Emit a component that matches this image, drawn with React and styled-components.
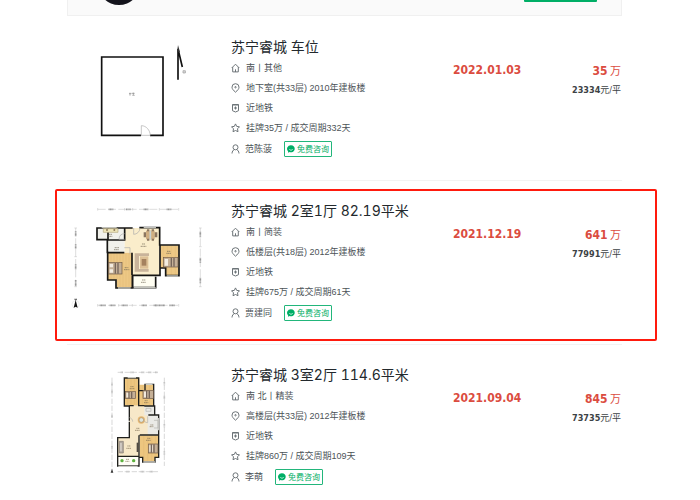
import React from "react";
import styled, { createGlobalStyle, css } from "styled-components";

const Global = createGlobalStyle`
  html { scrollbar-width: none; }
  body {
    margin: 0;
    background: #fff;
    color: #4c5357;
    font: 9px/20px "Liberation Sans", "Noto Sans CJK SC", sans-serif;
  }
  * { box-sizing: border-box; }
`;

const Page = styled.main`
  padding: 0 78px 0 67px;
`;

const AgentBar = styled.header`
  display: flex;
  align-items: flex-end;
  justify-content: space-between;
  height: 16px;
  margin-bottom: 1px;
  padding: 0 24px 10px 30px;
  overflow: hidden;
  background: #fafafa;
  border: 1px solid #f0f0f0;
  border-top: 0;
`;

const Avatar = styled.div`
  flex: none;
  width: 42px;
  height: 42px;
  border-radius: 50%;
  background: #14141c;
`;

const ContactButton = styled.button`
  flex: none;
  width: 73px;
  height: 24px;
  margin-bottom: 3px;
  border: 0;
  border-radius: 1px;
  background: #00ae66;
`;

const List = styled.ul`
  margin: 0;
  padding: 0;
  list-style: none;
`;

const Row = styled.li`
  position: relative;
  display: grid;
  grid-template-columns: 164px minmax(0, 1fr) 90px 79px;
  padding: 20px 0 21px;
  border-bottom: 1px solid #f3f3f3;
  ${({ $marked }) =>
    $marked &&
    css`
      &::after {
        content: "";
        position: absolute;
        inset: 8px -35px 3px -12px;
        border: 2px solid #ff1a0d;
        border-radius: 2px;
        pointer-events: none;
      }
    `}
`;

const Plan = styled.svg`
  display: block;
  width: 150px;
  height: 130px;
  margin-top: -10px;
`;

const Title = styled.h2`
  margin: 0 0 1px;
  color: #23292d;
  font: 400 14px/20px Inter, "Noto Sans CJK SC", sans-serif;
  font-variant-numeric: tabular-nums;
  white-space: nowrap;
`;

const Detail = styled.div`
  display: flex;
  align-items: center;
  gap: 6px;
  height: 20px;
  white-space: nowrap;
`;

const Agent = styled(Detail)`
  gap: 5px;
  margin-top: 1px;
`;

const Icon = styled.svg`
  flex: none;
  width: 9px;
  height: 10px;
  fill: none;
  stroke: #6d7478;
  stroke-width: 1;
`;

const Consult = styled.button`
  display: flex;
  align-items: center;
  gap: 2px;
  height: 16px;
  margin-left: 7px;
  padding: 0 2px;
  border: 1px solid #22b67b;
  border-radius: 1px;
  background: #fff;
  color: #00ae66;
  font: 8px/14px "Noto Sans CJK SC", sans-serif;
`;

const Bubble = styled.svg`
  width: 8px;
  height: 8px;
`;

const SoldOn = styled.div`
  margin-top: 23px;
  color: #db4c3f;
  font: 700 12px/20px "DejaVu Sans Condensed", "DejaVu Sans", sans-serif;
`;

const Price = styled.div`
  margin-top: 23px;
  padding-right: 1px;
  color: #db4c3f;
  font: 400 11px/20px "Noto Sans CJK SC", sans-serif;
  text-align: right;
  white-space: nowrap;
`;

const Total = styled.strong`
  font: 700 12px/20px "DejaVu Sans Condensed", "DejaVu Sans", sans-serif;
`;

const UnitPrice = styled.div`
  color: #3c4245;
  font: 400 9px/18px "DejaVu Sans Condensed", "Noto Sans CJK SC", sans-serif;
`;

const PATHS = {
  home: <path d="M.7 5 4.5 1.2 8.3 5M1.7 4.2V8.9h5.6V4.2M4.5 6.3V9" />,
  pin: (
    <>
      <path d="M4.5 9.2C2.4 7.4 1 5.9 1 4.2a3.5 3.5 0 0 1 7 0c0 1.7-1.4 3.2-3.5 5Z" />
      <circle cx="4.5" cy="4.2" r=".7" />
    </>
  ),
  tag: <path d="M1.5 1.5h6v6.2l-3 1.3-3-1.3ZM1.5 2h6M4.5 3.5v3M3 5h3" />,
  star: <path d="m4.5.9 1.2 2.5 2.8.4-2 2 .5 2.9-2.5-1.2L2 8.700l.5-2.900-2-2 2.800-.4Z" />,
  person: (
    <>
      <circle cx="4.500" cy="3.300" r="2.500" />
      <path d="M1 9.500c.1-2 1-3.300 2.400-3.900M8 9.500c-.1-2-1-3.300-2.400-3.900" />
    </>
  ),
};

const Glyph = ({ name }) => (
  <Icon viewBox="0 0 9 10" aria-hidden="true">{PATHS[name]}</Icon>
);

const ParkingPlan = () => (
  <Plan viewBox="0 0 150 130" role="img" aria-label="车位户型图">
    <g transform="translate(13 8) scale(.33333)" fill="none">
      <path d="M183 301H65V66h184v235h-39" stroke="#111" strokeWidth="5" />
      <path d="M184 303v-31c15 0 26 14 27 29h-27" stroke="#aaa" strokeWidth="2" />
      <path d="M147 176h7m-4-3v9m5-7h9m-7 6h7m-4-8v7" stroke="#888" strokeWidth="2" />
      <path d="M294 134V42l13 54" stroke="#111" strokeWidth="5" strokeLinejoin="bevel" />
      <path d="M294 30 291 52h9Z" fill="#333" />
      <path d="M309 107h7v7h-7Zm0 4h8" stroke="#999" strokeWidth="2" />
    </g>
  </Plan>
);

const Bed = ({ x, y, w = 38, h = 34 }) => (
  <g transform={`translate(${x} ${y})`}>
    <rect width={w} height={h} fill="#c5b097" stroke="#6e5947" strokeWidth="2" />
    <path d={`M3 4h10v10H3ZM3 ${h - 14}h10v10H3Z`} fill="#f3ece0" />
    <path d={`M${w - 12} 1v${h - 2}M${w - 20} 1v${h - 2}`} stroke="#75655a" strokeWidth="4" />
  </g>
);

const TwoRoomPlan = () => (
  <Plan viewBox="0 0 150 130" role="img" aria-label="两室一厅户型图">
    <g transform="translate(-7 4) scale(.33333)" fill="none">
      <g stroke="#bcbcbc" strokeWidth="1.500">
        <path d="M113 43h243M113 331h243M47 99v176M421 99v176" strokeDasharray="24 7" />
        <path d="M113 39v8M194 39v8M218 39v8M298 39v8M356 39v8M113 327v8M176 327v8M217 327v8M288 327v8M356 327v8M43 99h8M43 185h8M43 275h8M417 99h8M417 155h8M417 275h8" />
      </g>
      <g stroke="#9a9a9a" strokeWidth="5" strokeDasharray="3 1">
        <path d="M146 43h14M198 43h14M251 43h14M320 43h14M119 331h18M149 331h17M185 331h18M245 331h16M281 331h34M328 331h17" />
        <path d="M47 109v15M47 148v13M47 208v15M47 255v18M421 110v17M421 188v15M421 248v17" />
      </g>
      <path d="M113 99h81v35h-81ZM144 134h50v39h-50Z" fill="#f1f1eb" />
      <path d="M194 99h104v141h-80v-67h-24Z" fill="#faedcb" />
      <path d="M144 173h73v105h-47v-23h-26ZM301 151h55v91h-39v-23h-16Z" fill="#edc885" />
      <path d="M218 241h70v36h-70Z" fill="#fffef2" />
      <g stroke="#deb573" strokeWidth="1">
        <path d="M153 175v78M162 175v78M171 175v102M180 175v102M189 175v102M198 175v102M207 175v102M310 153v66M322 153v87M334 153v87M346 153v87" />
      </g>
      <path d="M218 99h-24v36h-50v-36h-33v35h31v38h1v83h25v24h50v-38h82v-22h17v23h40v-92h-58v-52h-61M194 99h-81M218 278h69v-33M217 241v37M194 99v34M144 173h49M216 173v67M300 151v92" stroke="#161614" strokeWidth="5" />
      <path d="M221 278h66M174 279h38M320 243h34M251 98h37M125 98h45" stroke="#c1c1bb" strokeWidth="4" />
      <path d="M221 99v19c10 0 18-8 19-18M194 116c-10 0-17 6-17 17h17M193 158h17v20" stroke="#aaa" strokeWidth="2" />
      <path d="M130 101h44v11h-44Z" fill="#efe6b8" stroke="#b5a780" strokeWidth="2" />
      <circle cx="141" cy="105" r="3" fill="#8f7b5a" /><circle cx="163" cy="105" r="3" fill="#8f7b5a" />
      <Bed x={146} y={203} w={40} /><Bed x={311} y={188} w={43} h={28} />
      <path d="M258 107h26v26h-26Z" fill="#d0af82" />
      <path d="M251 112h7v15h-7ZM284 112h8v15h-8ZM261 103h7v6h-7ZM275 103h7v6h-7ZM261 131h7v6h-7ZM275 131h7v6h-7Z" fill="#8b7660" />
      <path d="M271 107v26" stroke="#c7d2d4" strokeWidth="5" />
      <path d="M224 175h43v8h-30v39h29v8h-42Z" fill="#c9b49b" />
      <path d="M240 184h25v37h-25Z" fill="#ddc096" />
      <path d="M245 192h14v20h-14Z" fill="#a5825f" />
      <g stroke="#6c6452" strokeWidth="2">
        <path d="M147 118h10M145 124h12M164 158h13M162 164h14M246 147h10M242 154h17M194 218h11M192 224h16M321 169h11M319 175h15M246 255h11M243 262h14" strokeDasharray="4 1" />
      </g>
      <circle cx="47" cy="328" r="11" stroke="#d2d2d2" strokeWidth="1" />
      <path d="m47 315 6 23-6-3-6 3Z" fill="#111" /><path d="M45 311v4h4v-4" stroke="#111" strokeWidth="2" />
    </g>
  </Plan>
);

const ThreeRoomPlan = () => (
  <Plan viewBox="0 0 150 130" role="img" aria-label="三室两厅户型图">
    <g transform="translate(28 5) scale(.33333)" fill="none">
      <g stroke="#c4c4c4" strokeWidth="2">
        <path d="M68 37h124M68 335h124M51 53v277M208 53v265" strokeDasharray="16 5" />
        <path d="M77 37h8M106 37h10M139 37h9M160 37h9M180 37h8M94 335h9M137 335h12M164 335h10M51 68v9M51 89v12M51 164v9M51 258v9M208 66v10M208 107v10M208 192v10M208 274v10" strokeWidth="5" strokeDasharray="3 1" />
      </g>
      <path d="M88 53h45v84H88ZM133 74h42v63h-42ZM134 226h56v66h-10v13h-37v-13h-9Z" fill="#edc67f" />
      <path d="M103 137h58v90h-29v62H68v-55h35Z" fill="#f7e8c8" />
      <path d="M148 138h31v28h-31ZM158 166h32v58h-32Z" fill="#eaeae6" />
      <path d="M68 289h62v29H68Z" fill="#fffef6" />
      <g stroke="#deb46d" strokeWidth="1"><path d="M98 56v79M108 56v79M118 56v79M142 77v58M153 77v58M164 77v58M146 229v72M158 229v75M170 229v75M181 229v62" /></g>
      <path d="M103 182v-44H88V54h43v83h17M132 92h18V73h26v65h3v27h12v60h-57M191 225v67h-11v14h-37v-14h-11v26H68v-85h35v-48M132 226v63H68M103 137h13M148 138h31M160 165h30" stroke="#20201d" strokeWidth="4" />
      <path d="M98 53h25M152 73h21M145 306h35M70 319h58M190 174v37" stroke="#c9c9c3" strokeWidth="4" />
      <Bed x={91} y={95} w={31} h={21} /><Bed x={144} y={91} w={31} h={25} /><Bed x={160} y={252} w={29} h={27} />
      <circle cx="139" cy="180" r="11" fill="#e5b976" />
      <circle cx="139" cy="180" r="7" fill="#dce5df" stroke="#b78f5e" strokeWidth="2" />
      <path d="M73 244h12v35H73Z" fill="#b1a89f" stroke="#857b74" strokeWidth="2" />
      <path d="M78 249v25" stroke="#ece8e2" strokeWidth="3" />
      <path d="M125 248h6v28h-6Z" fill="#504a43" />
      <circle cx="81" cy="302" r="5" fill="#5db23f" /><circle cx="116" cy="302" r="5" fill="#5db23f" />
      <path d="M103 173c5 0 10 5 10 12M158 169v19c-7 0-12-4-12-12M177 181h12v23h-12M153 145h15v9h-15Z" stroke="#b2b2ad" strokeWidth="2" />
      <path d="M106 80h11M104 86h14M149 122h10M147 128h13M124 205h9M120 211h14M97 258h10M94 265h14M157 235h9M153 241h14M93 298h9M91 304h12M166 195h9M164 200h11" stroke="#7a6b52" strokeWidth="2" strokeDasharray="4 1" />
      <path d="m51 326 4 12h-8Z" fill="#333" />
    </g>
  </Plan>
);

const DEALS = [
  {
    title: "苏宁睿城 车位", facing: "南丨其他", floor: "地下室(共33层) 2010年建板楼",
    listing: "挂牌35万 / 成交周期332天", agent: "范陈菠", date: "2022.01.03",
    total: "35", unit: "23334", plan: ParkingPlan,
  },
  {
    title: "苏宁睿城 2室1厅 82.19平米", facing: "南丨简装", floor: "低楼层(共18层) 2012年建板楼",
    listing: "挂牌675万 / 成交周期61天", agent: "贾建同", date: "2021.12.19",
    total: "641", unit: "77991", plan: TwoRoomPlan, marked: true,
  },
  {
    title: "苏宁睿城 3室2厅 114.6平米", facing: "南 北丨精装", floor: "高楼层(共33层) 2012年建板楼",
    listing: "挂牌860万 / 成交周期109天", agent: "李萌", date: "2021.09.04",
    total: "845", unit: "73735", plan: ThreeRoomPlan,
  },
];

const Deal = ({ deal }) => {
  const Drawing = deal.plan;
  return (
    <Row $marked={deal.marked}>
      <Drawing />
      <div>
        <Title>{deal.title}</Title>
        <Detail><Glyph name="home" />{deal.facing}</Detail>
        <Detail><Glyph name="pin" />{deal.floor}</Detail>
        <Detail><Glyph name="tag" />近地铁</Detail>
        <Detail><Glyph name="star" />{deal.listing}</Detail>
        <Agent>
          <Glyph name="person" />
          {deal.agent}
          <Consult type="button">
            <Bubble viewBox="0 0 8 8" aria-hidden="true">
              <path d="M4 .3a3.700 3.500 0 1 1-1.500 6.700L1 7.700l.1-1.500A3.700 3.500 0 0 1 4 .3Z" fill="#00ae66" />
              <path d="M2.300 4.200c.8 1.400 2.600 1.400 3.400 0" fill="none" stroke="#fff" strokeWidth=".7" />
            </Bubble>
            免费咨询
          </Consult>
        </Agent>
      </div>
      <SoldOn>{deal.date}</SoldOn>
      <Price>
        <Total>{deal.total}</Total> 万
        <UnitPrice><b>{deal.unit}</b>元/平</UnitPrice>
      </Price>
    </Row>
  );
};

export default function App() {
  return (
    <Page>
      <Global />
      <AgentBar>
        <Avatar />
        <ContactButton type="button" aria-label="免费咨询" />
      </AgentBar>
      <List>
        {DEALS.map((deal) => <Deal key={deal.title} deal={deal} />)}
      </List>
    </Page>
  );
}
